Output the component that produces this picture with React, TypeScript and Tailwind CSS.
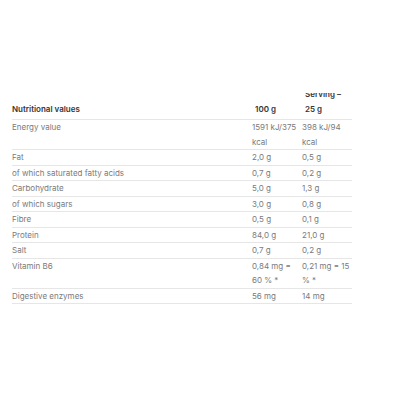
import React from "react";

type Row = { label: string; a: string; b: string };

const rows: Row[] = [
  { label: "Energy value", a: "1591 kJ/375 kcal", b: "398 kJ/94 kcal" },
  { label: "Fat", a: "2,0 g", b: "0,5 g" },
  { label: "of which saturated fatty acids", a: "0,7 g", b: "0,2 g" },
  { label: "Carbohydrate", a: "5,0 g", b: "1,3 g" },
  { label: "of which sugars", a: "3,0 g", b: "0,8 g" },
  { label: "Fibre", a: "0,5 g", b: "0,1 g" },
  { label: "Protein", a: "84,0 g", b: "21,0 g" },
  { label: "Salt", a: "0,7 g", b: "0,2 g" },
  { label: "Vitamin B6", a: "0,84 mg = 60 % *", b: "0,21 mg = 15 % *" },
  { label: "Digestive enzymes", a: "56 mg", b: "14 mg" },
  { label: "of which protease", a: "28 mg", b: "7 mg" },
];

export default function App() {
  return (
    <div
      className="w-[400px] h-[400px] bg-white"
      style={{ fontFamily: "Inter, 'Open Sans', sans-serif" }}
    >
      <div className="pt-[93px] pl-[12px]">
        <div className="h-[211px] w-[340px] overflow-hidden">
          <div className="-mt-[6px]">
            <div className="grid grid-cols-[240px_50px_50px] border-b border-[#e6e6e6] pb-[3px] text-[8px] leading-[14.5px] font-semibold text-[#333]">
              <div className="self-end">Nutritional values</div>
              <div className="self-end pl-[3px]">100 g</div>
              <div className="self-end pl-[3px]">Serving – 25 g</div>
            </div>
            {rows.map((r) => (
              <div
                key={r.label}
                className="grid grid-cols-[240px_50px_50px] border-b border-[#e6e6e6] text-[8px] leading-[14.5px] text-[#7a7a7a]"
              >
                <div>{r.label}</div>
                <div>{r.a}</div>
                <div>{r.b}</div>
              </div>
            ))}
          </div>
        </div>
      </div>
    </div>
  );
}
